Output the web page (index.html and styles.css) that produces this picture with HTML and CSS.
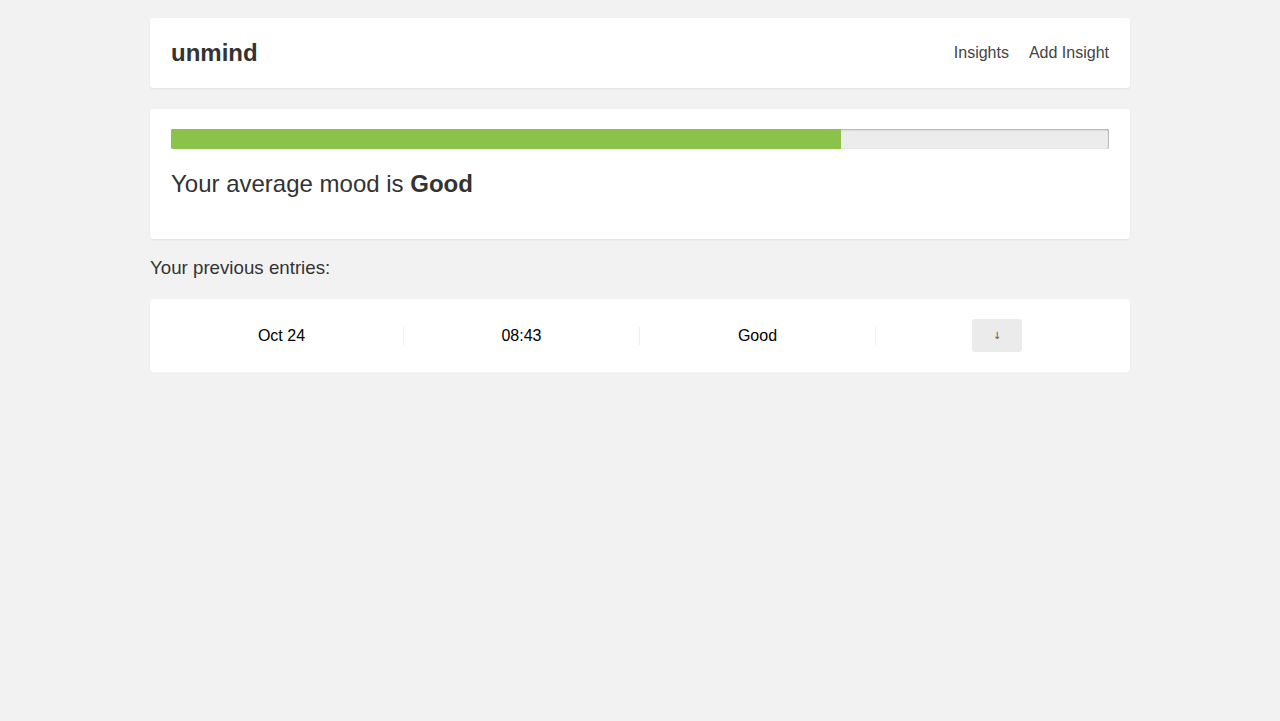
FILE: index.html
```html
<!DOCTYPE html>
<html lang="en">
<head>
<meta charset="utf-8">
<title>unmind</title>
<link rel="stylesheet" href="styles.css">
</head>
<body>
<div class="container">
  <header class="card header">
    <div class="logo">unmind</div>
    <nav class="nav">
      <a href="#">Insights</a>
      <a href="#">Add Insight</a>
    </nav>
  </header>
  <section class="card mood">
    <div class="progress"><div class="progress-fill" style="width: 71.43%"></div></div>
    <h2 class="mood-text">Your average mood is <strong>Good</strong></h2>
  </section>
  <p class="entries-title">Your previous entries:</p>
  <section class="card entries">
    <div class="entry-row">
      <div class="cell c1">Oct 24</div>
      <div class="cell c2 divided">08:43</div>
      <div class="cell c3 divided">Good</div>
      <div class="cell c4 divided"><button class="toggle">↓</button></div>
    </div>
  </section>
</div>
</body>
</html>
```
FILE: styles.css
```css
html, body {
  margin: 0;
  padding: 0;
  background: #f2f2f2;
  font-family: "Liberation Sans", Arial, Helvetica, sans-serif;
  color: #333;
}
.container {
  width: 980px;
  margin: 0 auto;
  padding-top: 18px;
}
.card {
  background: #fff;
  border-radius: 3px;
  box-shadow: 0 1px 2px rgba(0, 0, 0, 0.07);
}
.header {
  height: 70px;
  box-sizing: border-box;
  padding: 0 21px;
  display: flex;
  align-items: center;
  justify-content: space-between;
}
.logo {
  font-size: 24px;
  font-weight: bold;
  color: #333;
}
.nav {
  display: flex;
  gap: 20px;
}
.nav a {
  color: #444;
  text-decoration: none;
  font-size: 16px;
}
.mood {
  margin-top: 21px;
  padding: 20px 21px;
  height: 130px;
  box-sizing: border-box;
}
.progress {
  height: 20px;
  background: #ececec;
  border-radius: 2px;
  box-shadow: inset 0 1px 2px rgba(0, 0, 0, 0.25), inset -1px 0 1px rgba(0, 0, 0, 0.15);
  overflow: hidden;
}
.progress-fill {
  height: 100%;
  background: #8bc34a;
}
.mood-text {
  margin: 22px 0 0;
  font-size: 24px;
  line-height: 26px;
  font-weight: normal;
  color: #333;
}
.mood-text strong {
  font-weight: bold;
}
.entries-title {
  margin: 19px 0 21px;
  font-size: 18.72px;
  line-height: 20px;
  color: #333;
}
.entries {
  padding: 20px 10px;
  height: 73px;
  box-sizing: border-box;
}
.entry-row {
  display: grid;
  grid-template-columns: 243px 236px 236px 243px;
  align-items: center;
  height: 33px;
}
.cell {
  text-align: center;
  font-size: 16px;
  line-height: 18px;
  height: 18px;
  color: #000;
}
.divided {
  border-left: 1px solid #eee;
}
.c4 {
  display: flex;
  justify-content: center;
  align-items: center;
}
.toggle {
  flex: none;
  width: 50px;
  height: 33px;
  border: none;
  border-radius: 3px;
  background: #ebebeb;
  color: #555;
  font-family: "DejaVu Sans", sans-serif;
  font-size: 10px;
  padding: 0;
}
```
